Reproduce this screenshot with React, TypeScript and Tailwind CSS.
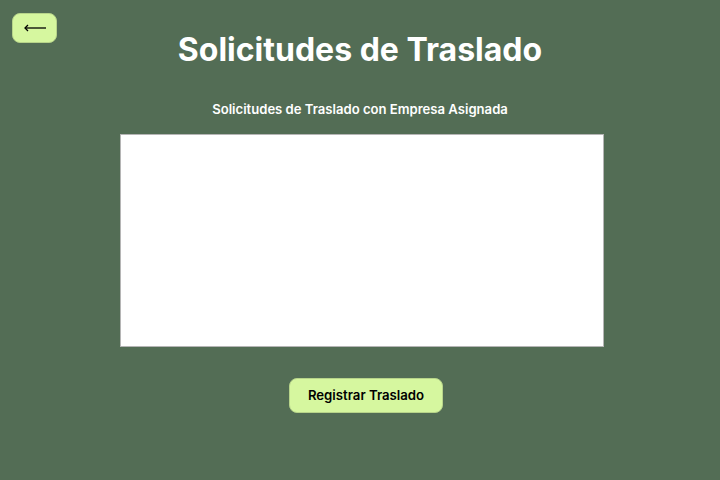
export default function App() {
  return (
    <div className="relative min-h-[480px] w-full bg-[#536d55] font-['Inter',sans-serif]">
      {/* Botón volver */}
      <button className="absolute left-[12px] top-[13px] flex h-[30px] w-[45px] items-center justify-center rounded-lg border border-[#b7d48a] bg-[#d6f79f] text-black">
        <svg width="22" height="8" viewBox="0 0 22 8" fill="none" stroke="currentColor" strokeWidth="1.3">
          <path d="M1 4h21" />
          <path d="M4 1 1 4l3 3" />
        </svg>
      </button>

      <main className="flex flex-col items-center pt-[30px]">
        <h1 className="text-[32px] font-bold leading-[40px] text-white">
          Solicitudes de Traslado
        </h1>
        <h2 className="mt-[31px] text-[13.1px] font-semibold leading-4 text-white">
          Solicitudes de Traslado con Empresa Asignada
        </h2>

        <div className="ml-[4px] mt-[17px] h-[213px] w-[484px] border border-[#b5b5b5] bg-white" />

        <button className="ml-[12px] mt-[31px] h-[35px] w-[154px] rounded-lg border border-[#b7d48a] bg-[#d6f79f] text-[13.2px] font-semibold text-black">
          Registrar Traslado
        </button>
      </main>
    </div>
  )
}
